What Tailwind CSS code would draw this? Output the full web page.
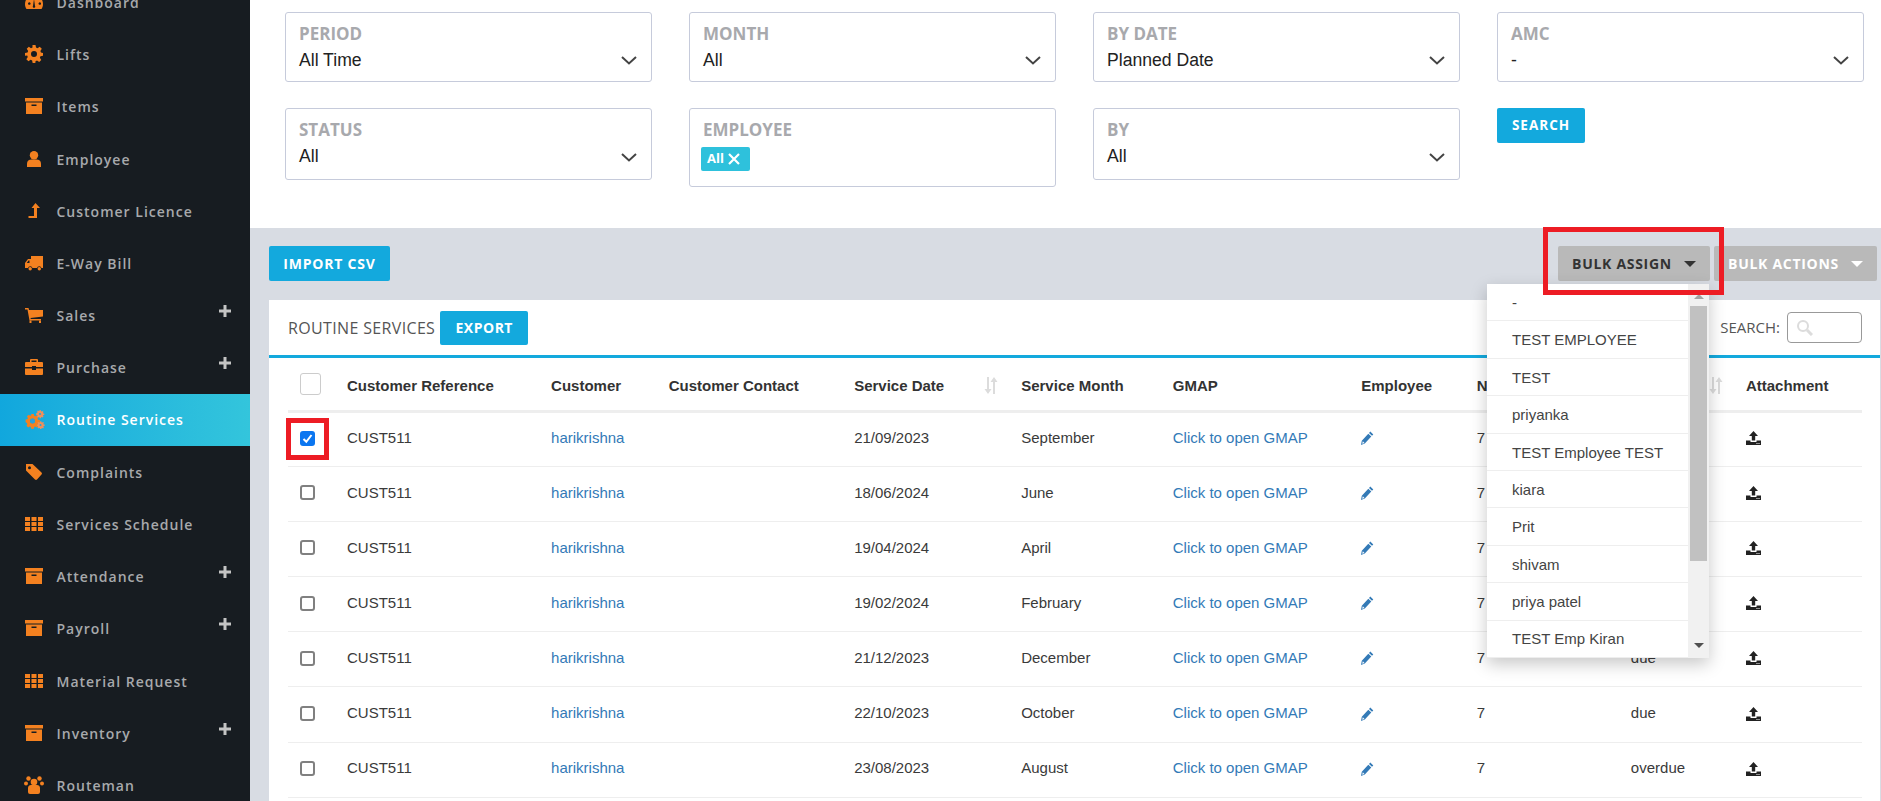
<!DOCTYPE html>
<html lang="en">

<head>
    <meta charset="UTF-8">
    <title>Routine Services</title>
    <script src="https://cdn.jsdelivr.net/npm/@tailwindcss/browser@4"></script>
</head>

<body class="bg-white font-['Liberation_Sans',sans-serif]">
    <svg class="hidden">
        <symbol id="box" viewBox="0 0 18 16"><path d="M0 0h18v3.500H0zM1 4.500h16V16H1zM6.500 6.500v1.500h5V6.500z" fill-rule="evenodd" fill="currentColor"/></symbol>
        <symbol id="grid" viewBox="0 0 18 14"><path d="M0 0h5v4H0zM6.500 0h5v4h-5zM13 0h5v4h-5zM0 5h5v4H0zM6.500 5h5v4h-5zM13 5h5v4h-5zM0 10h5v4H0zM6.500 10h5v4h-5zM13 10h5v4h-5z" fill="currentColor"/></symbol>
        <symbol id="plus" viewBox="0 0 12 12"><path d="M4.500 0h3v4.500H12v3H7.500V12h-3V7.500H0v-3h4.500z" fill="currentColor"/></symbol>
        <symbol id="chev" viewBox="0 0 16 9"><path d="M1 1l7 6.500L15 1" fill="none" stroke="#444" stroke-width="2"/></symbol>
        <symbol id="pencil" viewBox="0 0 13 14"><path d="M9.300.6l3 2.800-1.300 1.400-3-2.800zM7.300 2.700l3 2.800-6.500 7L0 14l.8-4.200zM1.800 10.300l-.6 2.500 2.300-.9z" fill="currentColor" fill-rule="evenodd"/></symbol>
        <symbol id="upload" viewBox="0 0 15 14"><path d="M7.500 0l4.500 5H9.200v4.500H5.800V5H3zM0 9.500h4.500v1.500h6V9.500H15V14H0zM10.500 12h1v1h-1zM12.500 12h1v1h-1z" fill="currentColor" fill-rule="evenodd"/></symbol>
        <symbol id="sort" viewBox="0 0 15 17"><path d="M3 0h2v12h2.500L4 17 .5 12H3zM10 0l3.500 5H11v12H9V5H6.500z" fill="currentColor"/></symbol>
    </svg>

    <div class="flex h-[801px] w-[1881px] overflow-hidden">
        <!-- Sidebar -->
        <aside class="w-[250px] shrink-0 bg-[#171c21] font-['Open_Sans',sans-serif] text-[14px] font-semibold tracking-[1px] text-[#a7a9ac]">
            <nav class="-mt-[24px]">
                <a class="flex h-[52.2px] items-center pl-[25px] pr-[19px]">
                    <svg class="mr-[13.500px] h-[16px] w-[18px] text-[#f48120]" viewBox="0 0 18 16"><path d="M9 1a9 9 0 0 0-9 9c0 2 .6 3.800 1.500 5h15c.9-1.200 1.500-3 1.500-5a9 9 0 0 0-9-9zM3 9.500a1.300 1.300 0 1 1 0 .1zM13.500 9.500a1.300 1.300 0 1 1 0 .1zM8 12l1-7 1 7a1.200 1.200 0 1 1-2 0z" fill="currentColor" fill-rule="evenodd"/></svg>
                    <span>Dashboard</span>
                </a>
                <a class="flex h-[52.2px] items-center pl-[25px] pr-[19px]">
                    <svg class="mr-[13.500px] h-[18px] w-[18px] text-[#f48120]" viewBox="0 0 24 24"><path d="M10 0h4l.7 3.400 2 .8L19.600 2.300l2.800 2.800-1.900 2.900.8 2L24 10.700v3.600l-3.400.7-.8 2 1.900 2.900-2.800 2.800-2.900-1.900-2 .8L13.800 24h-3.600l-.7-3.400-2-.8-2.900 1.900-2.800-2.800 1.900-2.900-.8-2L0 14.300v-3.600L3.400 10l.8-2-1.900-2.900 2.800-2.800 2.900 1.900 2-.8zM12 8a4 4 0 1 0 0 8 4 4 0 0 0 0-8z" fill="currentColor" fill-rule="evenodd"/></svg>
                    <span>Lifts</span>
                </a>
                <a class="flex h-[52.2px] items-center pl-[25px] pr-[19px]">
                    <svg class="mr-[13.500px] h-[16px] w-[18px] text-[#f48120]"><use href="#box"/></svg>
                    <span class="pt-[1px]">Items</span>
                </a>
                <a class="flex h-[52.2px] items-center pl-[25px] pr-[19px]">
                    <svg class="mr-[13.500px] h-[16px] w-[18px] text-[#f48120]" viewBox="0 0 18 16"><circle cx="9" cy="4.200" r="4.200" fill="currentColor"/><path d="M2 16v-3.500c0-2.500 2-4 4.500-4h5c2.500 0 4.500 1.500 4.500 4V16z" fill="currentColor"/></svg>
                    <span class="pt-[1px]">Employee</span>
                </a>
                <a class="flex h-[52.2px] items-center pl-[25px] pr-[19px]">
                    <svg class="mr-[13.500px] h-[15px] w-[18px] text-[#f48120]" viewBox="0 0 18 15"><path d="M10.500 0L15 5h-3v10H3.500v-2H9V5H6.500z" fill="currentColor"/></svg>
                    <span class="pt-[1px]">Customer Licence</span>
                </a>
                <a class="flex h-[52.2px] items-center pl-[25px] pr-[19px]">
                    <svg class="mr-[13.500px] h-[15px] w-[18px] text-[#f48120]" viewBox="0 0 18 15"><path d="M6 0h12v12h-1.500a2.300 2.300 0 0 0-4.500 0H7.500a2.300 2.300 0 0 0-4.500 0H0V7l3-4h3zM1.800 7H4.500V4.500H3.500z" fill="currentColor" fill-rule="evenodd"/><circle cx="5.200" cy="12.800" r="1.700" fill="currentColor"/><circle cx="14.300" cy="12.800" r="1.700" fill="currentColor"/></svg>
                    <span>E-Way Bill</span>
                </a>
                <a class="flex h-[52.2px] items-center pl-[25px] pr-[19px]">
                    <svg class="mr-[13.500px] h-[15px] w-[18px] text-[#f48120]" viewBox="0 0 18 15"><path d="M0 0h3.500l.5 2h14v6.500L5.500 10l.3 1H16v1.500H4.500L2.500 1.500H0z" fill="currentColor"/><rect x="4.500" y="12.500" width="2" height="2.500" fill="currentColor"/><rect x="14" y="12.500" width="2" height="2.500" fill="currentColor"/></svg>
                    <span>Sales</span>
                    <svg class="-mt-[8px] ml-auto h-[12px] w-[12px] text-[#c4c4c4]"><use href="#plus"/></svg>
                </a>
                <a class="flex h-[52.2px] items-center pl-[25px] pr-[19px]">
                    <svg class="mr-[13.500px] h-[16px] w-[18px] text-[#f48120]" viewBox="0 0 18 16"><path d="M6 0h6a1 1 0 0 1 1 1v2h4a1 1 0 0 1 1 1v4H11V7H7v1H0V4a1 1 0 0 1 1-1h4V1a1 1 0 0 1 1-1zM6.500 1.500V3h5V1.500zM0 9.500h7v1.500h4V9.500h7V15a1 1 0 0 1-1 1H1a1 1 0 0 1-1-1z" fill="currentColor" fill-rule="evenodd"/></svg>
                    <span>Purchase</span>
                    <svg class="-mt-[8px] ml-auto h-[12px] w-[12px] text-[#c4c4c4]"><use href="#plus"/></svg>
                </a>
                <a class="flex h-[52.2px] items-center bg-gradient-to-r from-[#11a7dd] to-[#33c5dc] pl-[25px] pr-[19px] text-white">
                    <svg class="mr-[11.500px] h-[19px] w-[20px] text-[#f48120]" viewBox="0 0 20 19"><path d="M6.200 4h2.600l.4 1.800 1.100.5 1.500-1 1.800 1.800-1 1.500.5 1.100 1.800.4v2.600l-1.800.4-.5 1.100 1 1.500-1.800 1.800-1.500-1-1.100.5-.4 1.800H6.200l-.4-1.800-1.100-.5-1.500 1-1.800-1.800 1-1.500-.5-1.100L.6 12.200V9.600l1.800-.4.5-1.100-1-1.500 1.800-1.800 1.500 1 1.100-.5zM7.500 8.500a2.500 2.500 0 1 0 0 5 2.500 2.500 0 0 0 0-5z" fill="currentColor" fill-rule="evenodd"/><circle cx="7.500" cy="11" r="2.400" fill="#2f9fd8"/><path d="M15 0l.9.2.2 1 .7.400.9-.5.8.8-.5.9.3.7 1 .2v1.200l-1 .2-.3.700.5.900-.8.8-.9-.5-.7.3-.2 1h-1.200l-.2-1-.7-.3-.9.5-.8-.8.5-.9-.3-.7-1-.2V3l1-.2.3-.7-.5-.9.8-.8.9.5.7-.3zM15 3a1 1 0 1 0 0 2 1 1 0 0 0 0-2zM15.500 11l.8.2.2 1 .7.300.9-.5.800.8-.5.9.300.7 1 .2v1.200l-1 .2-.3.700.5.900-.8.800-.9-.5-.7.300-.2 1h-1.200l-.2-1-.7-.3-.9.500-.8-.8.500-.9-.3-.7-.6-.2v-1.200l.6-.2.3-.7-.5-.9.800-.8.900.5.700-.3zM15.500 14a1 1 0 1 0 0 2 1 1 0 0 0 0-2z" fill="#ef8f5c" fill-rule="evenodd"/></svg>
                    <span>Routine Services</span>
                </a>
                <a class="flex h-[52.2px] items-center pl-[25px] pr-[19px]">
                    <svg class="mr-[13.500px] h-[16px] w-[18px] text-[#f48120]" viewBox="0 0 18 16"><path d="M1 0h6.500l9 8.500a1.500 1.500 0 0 1 0 2L12 15.500a1.500 1.500 0 0 1-2 0L1 6.500zM4.500 2.200a1.500 1.500 0 1 0 0 3 1.500 1.500 0 0 0 0-3z" fill="currentColor" fill-rule="evenodd"/></svg>
                    <span class="pt-[1px]">Complaints</span>
                </a>
                <a class="flex h-[52.2px] items-center pl-[25px] pr-[19px]">
                    <svg class="mr-[13.500px] h-[14px] w-[18px] text-[#f48120]"><use href="#grid"/></svg>
                    <span class="pt-[1px]">Services Schedule</span>
                </a>
                <a class="flex h-[52.2px] items-center pl-[25px] pr-[19px]">
                    <svg class="mr-[13.500px] h-[16px] w-[18px] text-[#f48120]"><use href="#box"/></svg>
                    <span class="pt-[1px]">Attendance</span>
                    <svg class="-mt-[8px] ml-auto h-[12px] w-[12px] text-[#c4c4c4]"><use href="#plus"/></svg>
                </a>
                <a class="flex h-[52.2px] items-center pl-[25px] pr-[19px]">
                    <svg class="mr-[13.500px] h-[16px] w-[18px] text-[#f48120]"><use href="#box"/></svg>
                    <span class="pt-[1px]">Payroll</span>
                    <svg class="-mt-[8px] ml-auto h-[12px] w-[12px] text-[#c4c4c4]"><use href="#plus"/></svg>
                </a>
                <a class="flex h-[52.2px] items-center pl-[25px] pr-[19px]">
                    <svg class="mr-[13.500px] h-[14px] w-[18px] text-[#f48120]"><use href="#grid"/></svg>
                    <span class="pt-[1px]">Material Request</span>
                </a>
                <a class="flex h-[52.2px] items-center pl-[25px] pr-[19px]">
                    <svg class="mr-[13.500px] h-[16px] w-[18px] text-[#f48120]"><use href="#box"/></svg>
                    <span class="pt-[1px]">Inventory</span>
                    <svg class="-mt-[8px] ml-auto h-[12px] w-[12px] text-[#c4c4c4]"><use href="#plus"/></svg>
                </a>
                <a class="flex h-[52.2px] items-center pl-[24px] pr-[19px]">
                    <svg class="mr-[12.500px] h-[18px] w-[20px] text-[#f48120]" viewBox="0 0 20 18"><circle cx="4.500" cy="2.500" r="2.200" fill="currentColor"/><circle cx="15.500" cy="2.500" r="2.200" fill="currentColor"/><circle cx="10" cy="6" r="3.300" fill="currentColor"/><circle cx="2" cy="7.500" r="2" fill="currentColor"/><circle cx="18" cy="7.500" r="2" fill="currentColor"/><path d="M4 12c0-2 1.500-3 3-3h6c1.500 0 3 1 3 3v4a2 2 0 0 1-2 2H6a2 2 0 0 1-2-2z" fill="currentColor"/></svg>
                    <span class="pt-[1px]">Routeman</span>
                </a>
            </nav>
        </aside>

        <main class="relative flex min-w-0 flex-1 flex-col">
            <!-- Filters -->
            <section class="grid h-[228px] shrink-0 grid-cols-[367px_367px_367px_367px] content-start items-start gap-x-[37px] gap-y-[26px] bg-white pl-[35px] pt-[12px]">
                <div class="relative h-[70px] rounded-[3px] border border-[#c6cbdb] pl-[13px] pt-[10px]">
                    <div class="font-['Open_Sans',sans-serif] text-[17px] leading-[22px] font-bold text-[#a8a9ad]">PERIOD</div>
                    <div class="mt-[3px] text-[17.600px] leading-[24px] text-[#222]">All Time</div>
                    <svg class="absolute right-[14px] top-[43px] h-[9px] w-[16px]"><use href="#chev"/></svg>
                </div>
                <div class="relative h-[70px] rounded-[3px] border border-[#c6cbdb] pl-[13px] pt-[10px]">
                    <div class="font-['Open_Sans',sans-serif] text-[17px] leading-[22px] font-bold text-[#a8a9ad]">MONTH</div>
                    <div class="mt-[3px] text-[17.600px] leading-[24px] text-[#222]">All</div>
                    <svg class="absolute right-[14px] top-[43px] h-[9px] w-[16px]"><use href="#chev"/></svg>
                </div>
                <div class="relative h-[70px] rounded-[3px] border border-[#c6cbdb] pl-[13px] pt-[10px]">
                    <div class="font-['Open_Sans',sans-serif] text-[17px] leading-[22px] font-bold text-[#a8a9ad]">BY DATE</div>
                    <div class="mt-[3px] text-[17.600px] leading-[24px] text-[#222]">Planned Date</div>
                    <svg class="absolute right-[14px] top-[43px] h-[9px] w-[16px]"><use href="#chev"/></svg>
                </div>
                <div class="relative h-[70px] rounded-[3px] border border-[#c6cbdb] pl-[13px] pt-[10px]">
                    <div class="font-['Open_Sans',sans-serif] text-[17px] leading-[22px] font-bold text-[#a8a9ad]">AMC</div>
                    <div class="mt-[3px] text-[17.600px] leading-[24px] text-[#222]">-</div>
                    <svg class="absolute right-[14px] top-[43px] h-[9px] w-[16px]"><use href="#chev"/></svg>
                </div>
                <div class="relative h-[72px] rounded-[3px] border border-[#c6cbdb] pl-[13px] pt-[10px]">
                    <div class="font-['Open_Sans',sans-serif] text-[17px] leading-[22px] font-bold text-[#a8a9ad]">STATUS</div>
                    <div class="mt-[3px] text-[17.600px] leading-[24px] text-[#222]">All</div>
                    <svg class="absolute right-[14px] top-[44px] h-[9px] w-[16px]"><use href="#chev"/></svg>
                </div>
                <div class="h-[79px] rounded-[3px] border border-[#c6cbdb] pl-[11px] pt-[10px]">
                    <div class="pl-[2px] font-['Open_Sans',sans-serif] text-[17px] leading-[22px] font-bold text-[#a8a9ad]">EMPLOYEE</div>
                    <div class="mt-[6px] inline-flex h-[24px] w-[49px] items-center gap-[4px] rounded-[2px] bg-[#2ec1dc] pl-[6px] font-['Open_Sans',sans-serif] text-[13px] font-bold text-white">
                        <span>All</span>
                        <svg class="h-[12px] w-[12px]" viewBox="0 0 12 12"><path d="M1 1l10 10M11 1L1 11" stroke="#fff" stroke-width="2.200"/></svg>
                    </div>
                </div>
                <div class="relative h-[72px] rounded-[3px] border border-[#c6cbdb] pl-[13px] pt-[10px]">
                    <div class="font-['Open_Sans',sans-serif] text-[17px] leading-[22px] font-bold text-[#a8a9ad]">BY</div>
                    <div class="mt-[3px] text-[17.600px] leading-[24px] text-[#222]">All</div>
                    <svg class="absolute right-[14px] top-[44px] h-[9px] w-[16px]"><use href="#chev"/></svg>
                </div>
                <div>
                    <button class="h-[35px] w-[88px] rounded-[2px] bg-[#13a9dd] font-['Open_Sans',sans-serif] text-[13.500px] font-bold tracking-[1px] text-white">SEARCH</button>
                </div>
            </section>

            <!-- Table area -->
            <section class="relative flex-1 bg-[#d8dce3] pl-[19px] pr-px">
                <div class="flex h-[72px] items-start justify-between pt-[18px] pr-[3px]">
                    <button class="h-[35px] w-[121px] rounded-[2px] bg-[#13a9dd] font-['Open_Sans',sans-serif] text-[14px] font-bold tracking-[.8px] text-white">IMPORT CSV</button>
                    <div class="flex gap-[4px] font-['Open_Sans',sans-serif] text-[14px] font-bold tracking-[.7px]">
                        <button class="flex h-[35px] w-[152px] items-center justify-center gap-[12px] rounded-[2px] bg-[#b9b9b9] text-[#333]">BULK ASSIGN <span class="h-0 w-0 border-x-[6px] border-t-[6px] border-x-transparent border-t-[#333]"></span></button>
                        <button class="flex h-[35px] w-[163px] items-center justify-center gap-[12px] rounded-[2px] bg-[#b9b9b9] text-white">BULK ACTIONS <span class="h-0 w-0 border-x-[6px] border-t-[6px] border-x-transparent border-t-white"></span></button>
                    </div>
                </div>

                <div class="h-full bg-white">
                    <div class="flex h-[55px] items-center pl-[19px] pr-[18px]">
                        <span class="font-['Open_Sans',sans-serif] text-[16px] tracking-[.35px] text-[#555]">ROUTINE SERVICES</span>
                        <button class="ml-[5px] h-[34px] w-[88px] rounded-[2px] bg-[#13a9dd] font-['Open_Sans',sans-serif] text-[14px] font-bold tracking-[.5px] text-white">EXPORT</button>
                        <span class="ml-auto font-['Open_Sans',sans-serif] text-[15px] text-[#555]">SEARCH:</span>
                        <div class="ml-[7px] flex h-[31px] w-[75px] items-center rounded-[4px] border border-[#999] pl-[8px]">
                            <svg class="h-[17px] w-[17px]" viewBox="0 0 17 17"><circle cx="7" cy="7" r="5" fill="none" stroke="#dcdcdc" stroke-width="2"/><path d="M11 11l5 5" stroke="#dcdcdc" stroke-width="3"/></svg>
                        </div>
                    </div>
                    <div class="h-[3px] bg-[#13a9dd]"></div>
                    <div class="pl-[19px]">
                        <table class="w-[1574px] table-fixed text-[15px] text-[#3a3a3a]">
                            <colgroup>
                                <col class="w-[49px]"><col class="w-[204px]"><col class="w-[117.6px]"><col class="w-[185.4px]"><col class="w-[167px]"><col class="w-[151.5px]"><col class="w-[188.5px]"><col class="w-[115.5px]"><col class="w-[154px]"><col class="w-[115px]"><col class="w-[126px]">
                            </colgroup>
                            <thead>
                                <tr class="h-[53px] border-b-[3px] border-[#eee] text-left text-[15px] font-bold text-[#333]">
                                    <th class="pl-[12px]"><div class="h-[22px] w-[21px] rounded-[3px] border border-[#ccc]"></div></th>
                                    <th class="pl-[10px] pt-[4px]">Customer Reference</th>
                                    <th class="pl-[10px] pt-[4px]">Customer</th>
                                    <th class="pl-[10px] pt-[4px]">Customer Contact</th>
                                    <th class="pl-[10px] pt-[4px]"><div class="flex items-center justify-between pr-[12px]">Service Date<svg class="h-[17px] w-[15px] text-[#dcdcdc]"><use href="#sort"/></svg></div></th>
                                    <th class="pl-[10px] pt-[4px]">Service Month</th>
                                    <th class="pl-[10px] pt-[4px]">GMAP</th>
                                    <th class="pl-[10px] pt-[4px]">Employee</th>
                                    <th class="pl-[10px] pt-[4px]">No of Visits</th>
                                    <th class="pl-[10px] pt-[4px]"><div class="flex items-center justify-between pr-[12px]">Status<svg class="h-[17px] w-[15px] text-[#dcdcdc]"><use href="#sort"/></svg></div></th>
                                    <th class="pl-[10px] pt-[4px]">Attachment</th>
                                </tr>
                            </thead>
                            <tbody class="[&>tr>td]:pb-[2px]">
                                <tr class="h-[55.2px] border-b border-[#eee]">
                                    <td class="pl-[12px]"><div class="flex h-[15px] w-[15px] items-center justify-center rounded-[3px] bg-[#0b76f0]"><svg class="h-[11px] w-[11px]" viewBox="0 0 11 11"><path d="M1.500 6l2.800 2.800L9.500 2" fill="none" stroke="#fff" stroke-width="2"/></svg></div></td>
                                    <td class="pl-[10px]">CUST511</td>
                                    <td class="pl-[10px] text-[#337ab7]">harikrishna</td>
                                    <td class="pl-[10px]"></td>
                                    <td class="pl-[10px]">21/09/2023</td>
                                    <td class="pl-[10px]">September</td>
                                    <td class="pl-[10px] text-[#337ab7]">Click to open GMAP</td>
                                    <td class="pl-[10px] text-[#337ab7]"><svg class="h-[14px] w-[13px]"><use href="#pencil"/></svg></td>
                                    <td class="pl-[10px]">7</td>
                                    <td class="pl-[10px]">overdue</td>
                                    <td class="pl-[10px]"><svg class="h-[14px] w-[15px] text-[#222]"><use href="#upload"/></svg></td>
                                </tr>
                                <tr class="h-[55.2px] border-b border-[#eee]">
                                    <td class="pl-[12px]"><div class="h-[15px] w-[15px] rounded-[3px] border-2 border-[#808080] bg-white"></div></td>
                                    <td class="pl-[10px]">CUST511</td>
                                    <td class="pl-[10px] text-[#337ab7]">harikrishna</td>
                                    <td class="pl-[10px]"></td>
                                    <td class="pl-[10px]">18/06/2024</td>
                                    <td class="pl-[10px]">June</td>
                                    <td class="pl-[10px] text-[#337ab7]">Click to open GMAP</td>
                                    <td class="pl-[10px] text-[#337ab7]"><svg class="h-[14px] w-[13px]"><use href="#pencil"/></svg></td>
                                    <td class="pl-[10px]">7</td>
                                    <td class="pl-[10px]">due</td>
                                    <td class="pl-[10px]"><svg class="h-[14px] w-[15px] text-[#222]"><use href="#upload"/></svg></td>
                                </tr>
                                <tr class="h-[55.2px] border-b border-[#eee]">
                                    <td class="pl-[12px]"><div class="h-[15px] w-[15px] rounded-[3px] border-2 border-[#808080] bg-white"></div></td>
                                    <td class="pl-[10px]">CUST511</td>
                                    <td class="pl-[10px] text-[#337ab7]">harikrishna</td>
                                    <td class="pl-[10px]"></td>
                                    <td class="pl-[10px]">19/04/2024</td>
                                    <td class="pl-[10px]">April</td>
                                    <td class="pl-[10px] text-[#337ab7]">Click to open GMAP</td>
                                    <td class="pl-[10px] text-[#337ab7]"><svg class="h-[14px] w-[13px]"><use href="#pencil"/></svg></td>
                                    <td class="pl-[10px]">7</td>
                                    <td class="pl-[10px]">due</td>
                                    <td class="pl-[10px]"><svg class="h-[14px] w-[15px] text-[#222]"><use href="#upload"/></svg></td>
                                </tr>
                                <tr class="h-[55.2px] border-b border-[#eee]">
                                    <td class="pl-[12px]"><div class="h-[15px] w-[15px] rounded-[3px] border-2 border-[#808080] bg-white"></div></td>
                                    <td class="pl-[10px]">CUST511</td>
                                    <td class="pl-[10px] text-[#337ab7]">harikrishna</td>
                                    <td class="pl-[10px]"></td>
                                    <td class="pl-[10px]">19/02/2024</td>
                                    <td class="pl-[10px]">February</td>
                                    <td class="pl-[10px] text-[#337ab7]">Click to open GMAP</td>
                                    <td class="pl-[10px] text-[#337ab7]"><svg class="h-[14px] w-[13px]"><use href="#pencil"/></svg></td>
                                    <td class="pl-[10px]">7</td>
                                    <td class="pl-[10px]">due</td>
                                    <td class="pl-[10px]"><svg class="h-[14px] w-[15px] text-[#222]"><use href="#upload"/></svg></td>
                                </tr>
                                <tr class="h-[55.2px] border-b border-[#eee]">
                                    <td class="pl-[12px]"><div class="h-[15px] w-[15px] rounded-[3px] border-2 border-[#808080] bg-white"></div></td>
                                    <td class="pl-[10px]">CUST511</td>
                                    <td class="pl-[10px] text-[#337ab7]">harikrishna</td>
                                    <td class="pl-[10px]"></td>
                                    <td class="pl-[10px]">21/12/2023</td>
                                    <td class="pl-[10px]">December</td>
                                    <td class="pl-[10px] text-[#337ab7]">Click to open GMAP</td>
                                    <td class="pl-[10px] text-[#337ab7]"><svg class="h-[14px] w-[13px]"><use href="#pencil"/></svg></td>
                                    <td class="pl-[10px]">7</td>
                                    <td class="pl-[10px]">due</td>
                                    <td class="pl-[10px]"><svg class="h-[14px] w-[15px] text-[#222]"><use href="#upload"/></svg></td>
                                </tr>
                                <tr class="h-[55.2px] border-b border-[#eee]">
                                    <td class="pl-[12px]"><div class="h-[15px] w-[15px] rounded-[3px] border-2 border-[#808080] bg-white"></div></td>
                                    <td class="pl-[10px]">CUST511</td>
                                    <td class="pl-[10px] text-[#337ab7]">harikrishna</td>
                                    <td class="pl-[10px]"></td>
                                    <td class="pl-[10px]">22/10/2023</td>
                                    <td class="pl-[10px]">October</td>
                                    <td class="pl-[10px] text-[#337ab7]">Click to open GMAP</td>
                                    <td class="pl-[10px] text-[#337ab7]"><svg class="h-[14px] w-[13px]"><use href="#pencil"/></svg></td>
                                    <td class="pl-[10px]">7</td>
                                    <td class="pl-[10px]">due</td>
                                    <td class="pl-[10px]"><svg class="h-[14px] w-[15px] text-[#222]"><use href="#upload"/></svg></td>
                                </tr>
                                <tr class="h-[55.2px] border-b border-[#eee]">
                                    <td class="pl-[12px]"><div class="h-[15px] w-[15px] rounded-[3px] border-2 border-[#808080] bg-white"></div></td>
                                    <td class="pl-[10px]">CUST511</td>
                                    <td class="pl-[10px] text-[#337ab7]">harikrishna</td>
                                    <td class="pl-[10px]"></td>
                                    <td class="pl-[10px]">23/08/2023</td>
                                    <td class="pl-[10px]">August</td>
                                    <td class="pl-[10px] text-[#337ab7]">Click to open GMAP</td>
                                    <td class="pl-[10px] text-[#337ab7]"><svg class="h-[14px] w-[13px]"><use href="#pencil"/></svg></td>
                                    <td class="pl-[10px]">7</td>
                                    <td class="pl-[10px]">overdue</td>
                                    <td class="pl-[10px]"><svg class="h-[14px] w-[15px] text-[#222]"><use href="#upload"/></svg></td>
                                </tr>
                            </tbody>
                        </table>
                    </div>
                </div>

                <!-- Bulk assign menu -->
                <div class="absolute left-[1237px] top-[56px] z-10 flex h-[374px] w-[222px] overflow-hidden bg-white text-[15px] text-[#444] shadow-[0_6px_16px_rgba(0,0,0,.22)]">
                    <ul class="w-[201px] shrink-0">
                        <li class="flex h-[37.4px] items-center border-b border-[#eee] pl-[25px] pt-[2px]">-</li>
                        <li class="flex h-[37.4px] items-center border-b border-[#eee] pl-[25px] pt-[2px]">TEST EMPLOYEE</li>
                        <li class="flex h-[37.4px] items-center border-b border-[#eee] pl-[25px] pt-[2px]">TEST</li>
                        <li class="flex h-[37.4px] items-center border-b border-[#eee] pl-[25px] pt-[2px]">priyanka</li>
                        <li class="flex h-[37.4px] items-center border-b border-[#eee] pl-[25px] pt-[2px]">TEST Employee TEST</li>
                        <li class="flex h-[37.4px] items-center border-b border-[#eee] pl-[25px] pt-[2px]">kiara</li>
                        <li class="flex h-[37.4px] items-center border-b border-[#eee] pl-[25px] pt-[2px]">Prit</li>
                        <li class="flex h-[37.4px] items-center border-b border-[#eee] pl-[25px] pt-[2px]">shivam</li>
                        <li class="flex h-[37.4px] items-center border-b border-[#eee] pl-[25px] pt-[2px]">priya patel</li>
                        <li class="flex h-[37.4px] items-center border-b border-[#eee] pl-[25px] pt-[2px]">TEST Emp Kiran</li>
                    </ul>
                    <div class="flex flex-1 flex-col items-center bg-[#f1f1f1] pt-[10px]">
                        <span class="h-0 w-0 border-x-[5px] border-b-[5px] border-x-transparent border-b-[#a3a3a3]"></span>
                        <div class="mt-[7px] h-[255px] w-[17px] bg-[#c1c1c1]"></div>
                        <span class="mt-[82px] h-0 w-0 border-x-[5px] border-t-[5px] border-x-transparent border-t-[#505050]"></span>
                    </div>
                </div>

                <!-- Red annotations -->
                <div class="absolute left-[1293px] top-[-1px] z-20 h-[68px] w-[181px] border-[5px] border-[#ed1c24]"></div>
                <div class="absolute left-[36px] top-[190px] z-20 h-[42px] w-[43px] border-[5px] border-[#ed1c24]"></div>
            </section>
        </main>
    </div>
</body>

</html>
